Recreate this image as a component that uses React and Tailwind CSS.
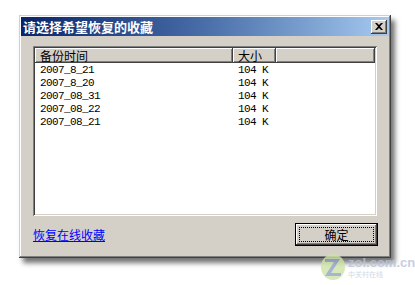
import React from "react";

const rows = [
  { name: "2007_8_21", size: "104 K" },
  { name: "2007_8_20", size: "104 K" },
  { name: "2007_08_31", size: "104 K" },
  { name: "2007_08_22", size: "104 K" },
  { name: "2007_08_21", size: "104 K" },
];

const cjk = { fontFamily: '"SimSun","Noto Sans CJK SC","DejaVu Sans",sans-serif' };
const mono = { fontFamily: '"Liberation Mono","Noto Sans CJK SC",monospace' };

function HeaderCell({ children, className = "" }) {
  return (
    <div
      className={
        "h-[15px] flex items-center pl-[5px] bg-[#d4d0c8] text-[12px] leading-none text-black shadow-[inset_-1px_-1px_#404040,inset_1px_1px_#fff,inset_-2px_-2px_#808080] " +
        className
      }
    >
      {children}
    </div>
  );
}

export default function App() {
  return (
    <div className="relative w-[415px] h-[285px] bg-white overflow-hidden" style={cjk}>
      <div className="pt-[15px] pl-[19px]">
        <div className="w-[372px] h-[243px] bg-[#d4d0c8] p-[2px] flex flex-col shadow-[inset_-1px_-1px_#404040,inset_1px_1px_#d4d0c8,inset_-2px_-2px_#808080,inset_2px_2px_#fff,4px_5px_5px_rgba(0,0,0,0.55)]">
          {/* title bar */}
          <div className="h-[19px] flex items-center justify-between pl-[2px] pr-[2px] bg-gradient-to-r from-[#0a246a] via-[#4a6ea8] to-[#a6caf0]">
            <span className="text-white font-bold text-[13px] leading-none">请选择希望恢复的收藏</span>
            <div className="w-[16px] h-[14px] bg-[#d4d0c8] flex items-center justify-center shadow-[inset_-1px_-1px_#404040,inset_1px_1px_#fff,inset_-2px_-2px_#808080]">
              <svg width="8" height="7" viewBox="0 0 8 7">
                <path d="M0 0h2l2 2 2-2h2L5 3.5 8 7H6L4 5 2 7H0l3-3.5z" fill="#000" />
              </svg>
            </div>
          </div>

          {/* body */}
          <div className="flex-1 flex flex-col px-[12px] pt-[10px] pb-[9px]">
            <div className="h-[170px] bg-white p-[2px] flex flex-col shadow-[inset_1px_1px_#808080,inset_-1px_-1px_#fff,inset_2px_2px_#404040,inset_-2px_-2px_#d4d0c8]">
              <div className="flex">
                <HeaderCell className="w-[198px]">备份时间</HeaderCell>
                <HeaderCell className="w-[43px]">大小</HeaderCell>
                <HeaderCell className="flex-1" />
              </div>
              <div className="flex flex-col pt-[1px]">
                {rows.map((r, i) => (
                  <div key={i} className="flex h-[13px] items-center text-[11px] leading-none text-black" style={mono}>
                    <span className="w-[198px] pl-[5px] tracking-[-0.6px]">{r.name}</span>
                    <span className="pl-[5px] tracking-[-0.6px]">{r.size}</span>
                  </div>
                ))}
              </div>
            </div>

            <div className="flex items-center justify-between mt-[7px]">
              <span className="text-[12px] leading-none text-[#0000ff] underline">恢复在线收藏</span>
              <div className="w-[83px] h-[23px] bg-[#d4d0c8] border border-black shadow-[inset_-1px_-1px_#404040,inset_1px_1px_#fff,inset_-2px_-2px_#808080] p-[3px] -mr-[1px]">
                <div className="w-full h-full border border-dotted border-black flex items-center justify-center text-[12px] leading-none text-black">
                  确定
                </div>
              </div>
            </div>
          </div>
        </div>
      </div>

      {/* watermark */}
      <div className="absolute left-[320px] top-[253px] flex items-start opacity-80">
        <svg width="26" height="28" viewBox="0 0 26 28">
          <ellipse cx="13" cy="14" rx="12" ry="13" fill="#cfe3a8" />
          <path d="M5 6h15l-9 14h10v3H5l9-14H5z" fill="#8fa3c8" />
        </svg>
        <div className="flex flex-col ml-[2px] mt-[3px]">
          <span className="text-[13px] leading-none font-bold text-[#b8c4d8]" style={{ fontFamily: '"Liberation Sans",sans-serif' }}>
            zol.com.cn
          </span>
          <span className="text-[7px] leading-none text-[#c8d0dc] mt-[2px]">中关村在线</span>
        </div>
      </div>
    </div>
  );
}
